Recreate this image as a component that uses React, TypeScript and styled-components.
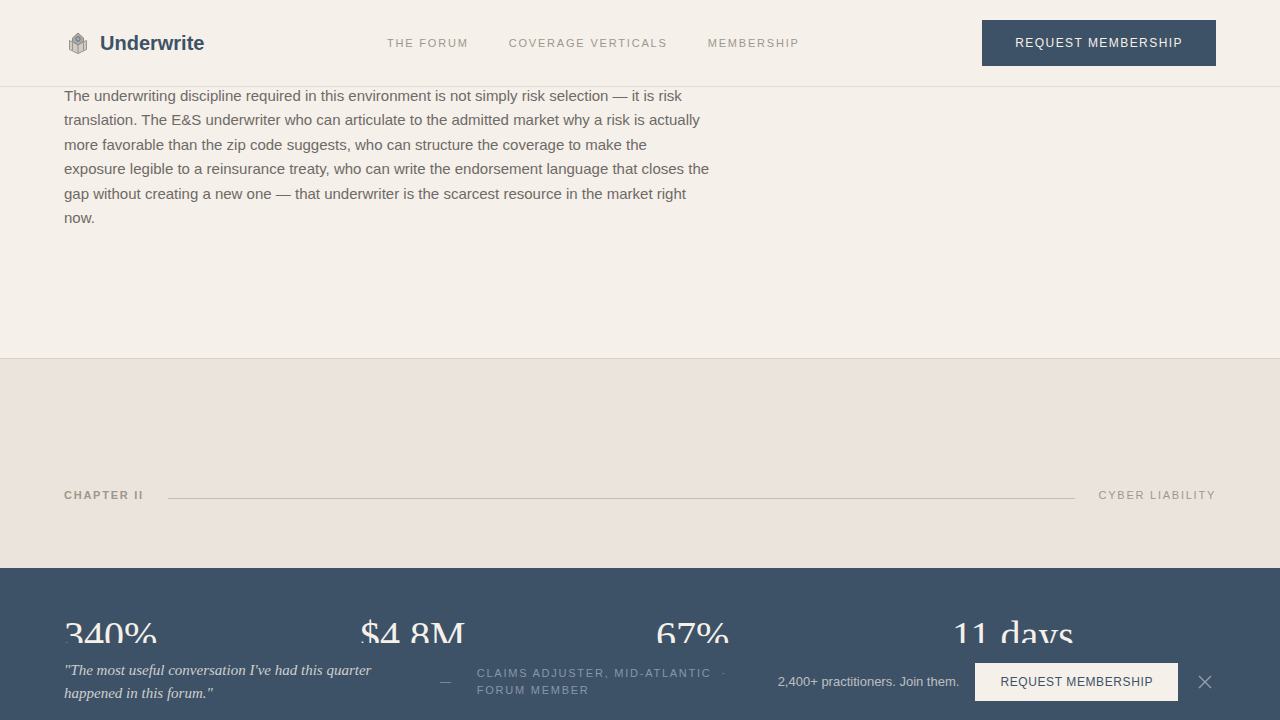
import React from "react";
import styled, { createGlobalStyle } from "styled-components";

const navy = "#3d5267";
const cream = "#f5f0ea";
const mist = "#8797a8";
const stone = "#9b988d";
const sans = `"Liberation Sans", Arial, sans-serif`;
const serif = `"Liberation Serif", "Times New Roman", serif`;

const GlobalStyle = createGlobalStyle`
  *, *::before, *::after { box-sizing: border-box; }
  body { margin: 0; background: ${cream}; font-family: ${sans}; }
  p { margin: 0; }
`;

const Page = styled.div`
  min-height: 100vh;
  display: flex;
  flex-direction: column;
`;

const Header = styled.header`
  position: fixed;
  inset: 0 0 auto;
  z-index: 2;
  display: flex;
  align-items: center;
  justify-content: space-between;
  padding: 20px 64px;
  background: ${cream};
  border-bottom: 1px solid #e2dbd3;
`;

const Brand = styled.a`
  display: flex;
  align-items: center;
  gap: 8px;
  color: ${navy};
  font-size: 20px;
  line-height: 28px;
  font-weight: 700;
  text-decoration: none;
`;

const Nav = styled.nav`
  display: flex;
  gap: 40px;
`;

const NavLink = styled.a`
  color: ${stone};
  font-size: 11px;
  line-height: 16px;
  letter-spacing: 0.165em;
  text-transform: uppercase;
  text-decoration: none;
`;

const Button = styled.button<{ $light?: boolean }>`
  flex: none;
  padding: ${(p) => (p.$light ? "10px 24px" : "14px 32px")};
  border: 1px solid ${(p) => (p.$light ? cream : navy)};
  background: ${(p) => (p.$light ? cream : navy)};
  color: ${(p) => (p.$light ? navy : cream)};
  font-family: inherit;
  font-size: 12px;
  line-height: 16px;
  letter-spacing: ${(p) => (p.$light ? "0.05em" : "0.12em")};
  text-transform: uppercase;
  white-space: nowrap;
  cursor: pointer;
`;

const Essay = styled.section`
  padding: 84px 64px 128px;
`;

const EssayText = styled.p`
  max-width: 648px;
  color: #6e6a66;
  font-size: 15px;
  line-height: 1.625;
`;

const Chapter = styled.section`
  padding: 128px 64px 64px;
  background: #ebe4dc;
  border-top: 1px solid #d8d1c8;
`;

const ChapterRow = styled.div`
  display: flex;
  align-items: baseline;
  gap: 24px;
`;

const ChapterLabel = styled.h2<{ $strong?: boolean }>`
  margin: 0;
  color: ${stone};
  font-size: 11px;
  line-height: 17px;
  font-weight: ${(p) => (p.$strong ? 700 : 400)};
  letter-spacing: 0.16em;
  text-transform: uppercase;
`;

const Rule = styled.div`
  flex: 1;
  height: 1px;
  background: #c4bdb2;
`;

const Stats = styled.section`
  flex: 1;
  display: grid;
  grid-template-columns: repeat(4, 1fr);
  gap: 32px;
  padding: 48px 64px;
  background: ${navy};
`;

const Stat = styled.p`
  color: ${cream};
  font-family: ${serif};
  font-size: 40px;
  line-height: 40px;
`;

const Banner = styled.aside`
  position: fixed;
  inset: auto 0 0;
  z-index: 2;
  display: flex;
  align-items: center;
  justify-content: space-between;
  gap: 24px;
  padding: 16px 64px;
  background: ${navy};
`;

const Testimonial = styled.div`
  flex: 1;
  display: flex;
  align-items: center;
  gap: 24px;
`;

const Quote = styled.p`
  flex: none;
  width: 352px;
  color: rgba(245, 240, 234, 0.8);
  font-family: ${serif};
  font-size: 15px;
  line-height: 1.5;
  font-style: italic;
`;

const Credit = styled.p`
  color: ${mist};
  font-size: 11px;
  line-height: 17px;
  letter-spacing: 0.16em;
  text-transform: uppercase;
`;

const Dash = styled.span`
  color: ${mist};
  font-size: 11px;
  line-height: 17px;
  letter-spacing: 0.16em;
`;

const Actions = styled.div`
  flex: none;
  display: flex;
  align-items: center;
  gap: 16px;
`;

const Invite = styled.p`
  color: rgba(245, 240, 234, 0.7);
  font-size: 13px;
  line-height: 20px;
`;

const Close = styled.button`
  display: flex;
  padding: 4px;
  border: 0;
  background: none;
  color: #95a3b1;
  cursor: pointer;
`;

const LogoMark = () => (
  <svg width="28" height="28" viewBox="0 0 28 28" fill="none" strokeLinejoin="round" aria-hidden="true">
    <path d="M5.5 11.5 L14 15.5 L22.5 11.5 V20.5 L14 24.5 L5.5 20.5 Z" fill="#d0cbc3" stroke="#98948d" />
    <path d="M14 15.5 V24.5 M8.5 13.5 V21 M19.5 13.5 V21" stroke="#98948d" />
    <path d="M14 4 L19.5 9 V12.5 L14 16 L8.5 12.5 V9 Z" fill="#aeaba7" stroke="#8d8a86" />
    <circle cx="14" cy="10" r="2.2" fill="#a4abb2" stroke="#66717d" />
  </svg>
);

const CloseIcon = () => (
  <svg width="14" height="14" viewBox="0 0 14 14" fill="none" stroke="currentColor" strokeWidth="1.3" aria-hidden="true">
    <path d="M1 1 L13 13 M13 1 L1 13" />
  </svg>
);

const navItems = ["The Forum", "Coverage Verticals", "Membership"];
const stats = ["340%", "$4.8M", "67%", "11 days"];

export default function App() {
  return (
    <Page>
      <GlobalStyle />
      <Header>
        <Brand href="#">
          <LogoMark />
          Underwrite
        </Brand>
        <Nav>
          {navItems.map((item) => (
            <NavLink key={item} href="#">{item}</NavLink>
          ))}
        </Nav>
        <Button type="button">Request Membership</Button>
      </Header>

      <Essay>
        <EssayText>
          The underwriting discipline required in this environment is not simply risk selection — it is risk
          translation. The E&amp;S underwriter who can articulate to the admitted market why a risk is actually
          more favorable than the zip code suggests, who can structure the coverage to make the exposure legible
          to a reinsurance treaty, who can write the endorsement language that closes the gap without creating a
          new one — that underwriter is the scarcest resource in the market right now.
        </EssayText>
      </Essay>

      <Chapter>
        <ChapterRow>
          <ChapterLabel $strong>Chapter II</ChapterLabel>
          <Rule />
          <ChapterLabel>Cyber Liability</ChapterLabel>
        </ChapterRow>
      </Chapter>

      <Stats>
        {stats.map((value) => (
          <Stat key={value}>{value}</Stat>
        ))}
      </Stats>

      <Banner>
        <Testimonial>
          <Quote>"The most useful conversation I've had this quarter happened in this forum."</Quote>
          <Dash>—</Dash>
          <Credit>Claims Adjuster, Mid-Atlantic &nbsp;·&nbsp; Forum Member</Credit>
        </Testimonial>
        <Actions>
          <Invite>2,400+ practitioners. Join them.</Invite>
          <Button type="button" $light>Request Membership</Button>
          <Close type="button" aria-label="Dismiss">
            <CloseIcon />
          </Close>
        </Actions>
      </Banner>
    </Page>
  );
}
